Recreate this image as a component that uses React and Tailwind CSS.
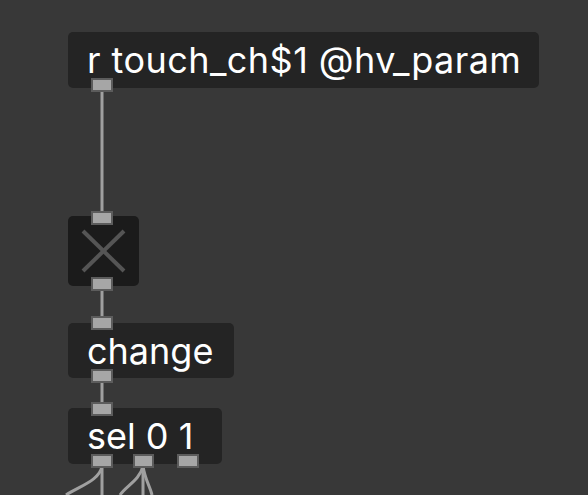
import React from "react";

const Port = ({ left, top, width = 22, height = 14 }) => (
  <div
    className="absolute bg-[#a6a6a6] border-2 border-[#5c5c5c]"
    style={{ left, top, width, height }}
  />
);

const Box = ({ left, top, width, height = 56, label, wide }) => (
  <div
    className={`absolute rounded-[5px] bg-[#242424] pl-[19px] text-[36px] leading-[56px] text-white whitespace-nowrap ${
      wide ? "tracking-[0.45px]" : ""
    }`}
    style={{ left, top, width, height, fontFamily: "Inter, 'Noto Sans', sans-serif" }}
  >
    {label}
  </div>
);

export default function App() {
  return (
    <div className="relative w-[588px] h-[495px] overflow-hidden bg-[#383838]">
      <svg
        className="absolute inset-0"
        width="588"
        height="495"
        fill="none"
        stroke="#a0a0a0"
        strokeWidth="3"
      >
        <line x1="102" y1="90" x2="102" y2="212" />
        <line x1="102" y1="289" x2="102" y2="317" />
        <line x1="102" y1="381" x2="102" y2="403" />
        <line x1="102" y1="466" x2="102" y2="495" />
        <path d="M102 466 C100 480 80 486 66 495" />
        <line x1="143" y1="466" x2="143" y2="495" />
        <path d="M143 466 C140 480 126 486 120 495" />
        <path d="M143 466 C145 480 150 486 152 495" />
      </svg>

      <Box left={68} top={32} width={471} label="r touch_ch$1 @hv_param" wide />
      <Port left={91} top={78} />

      <div className="absolute left-[68px] top-[216px] w-[71px] h-[70px] rounded-[5px] bg-[#1b1b1b]">
        <svg width="71" height="70" stroke="#555555" strokeWidth="4">
          <line x1="15" y1="15" x2="56" y2="55" />
          <line x1="56" y1="15" x2="15" y2="55" />
        </svg>
      </div>
      <Port left={91} top={211} />
      <Port left={91} top={277} />

      <Box left={68} top={323} width={166} height={55} label="change" />
      <Port left={91} top={316} />
      <Port left={91} top={369} />

      <Box left={68} top={408} width={154} label="sel 0 1" />
      <Port left={91} top={402} />
      <Port left={91} top={454} />
      <Port left={133} top={454} width={21} />
      <Port left={177} top={454} />
    </div>
  );
}
